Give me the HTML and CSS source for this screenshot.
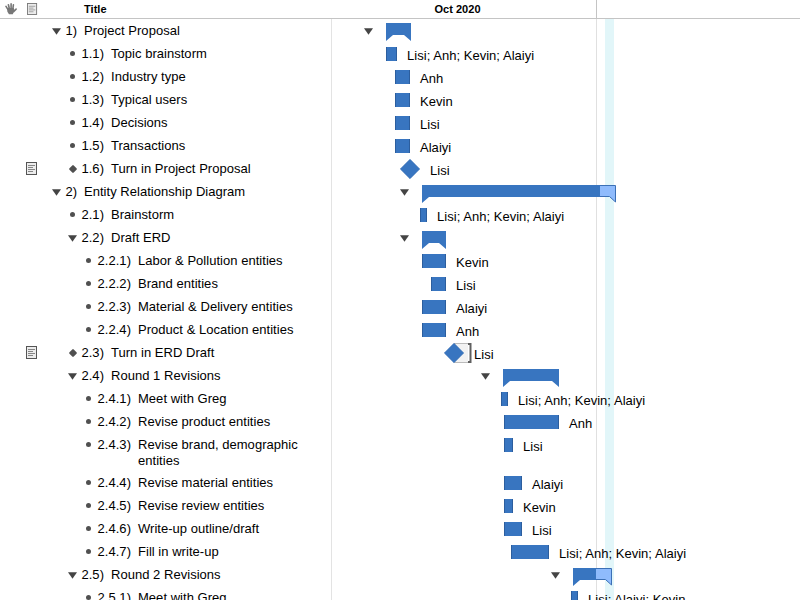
FILE: index.html
```
<!DOCTYPE html>
<html lang="en">
<head>
<meta charset="utf-8">
<title>Project Plan</title>
<link rel="stylesheet" href="styles.css">
</head>
<body>
<svg width="0" height="0" class="defs" aria-hidden="true">
  <symbol id="note" viewBox="0 0 12 13"><rect x=".5" y=".5" width="10" height="12" fill="#ececec" stroke="currentColor"/><path d="M2 3.5h7M2 5.5h5M2 7.5h7M2 9.5h5" stroke="currentColor" stroke-width=".9" opacity=".75"/></symbol>
  <symbol id="tri" viewBox="0 0 9 7"><path d="M0 .3h9L4.5 6.8z" fill="#444"/></symbol>
  <symbol id="dia" viewBox="0 0 20 20"><path d="M10 .3 19.7 10 10 19.7.3 10z" fill="#3875c0" stroke="#2e67b0" stroke-width=".6"/></symbol>
</svg>
<div class="app">
  <header class="head">
    <div class="icons">
      <svg class="hand" viewBox="0 0 12 12"><path d="M2.9 6.4 1 3.4M4.4 6 3.4 1.7M6.1 6V.9M7.8 6.2 8.4 1.9M8.6 8.6l2.5-2.5" stroke="#777" stroke-width="1.6" stroke-linecap="round"/><path d="M1.9 5h6.9l.6 2.3-1.6 3.9H4L2.4 8.8z" fill="#777"/></svg>
      <svg class="note"><use href="#note"/></svg>
    </div>
    <div class="head-title">Title</div>
    <div class="head-month">Oct 2020</div>
    <div class="head-rest"></div>
  </header>
  <main class="body">
    <div class="row first"><div class="flag"></div><div class="item l1"><svg class="tri"><use href="#tri"/></svg><span class="num">1)</span><span class="name">Project Proposal</span></div><div class="track" style="padding-left:32px"><svg class="tri"><use href="#tri"/></svg><i class="group" style="width:25px"></i></div></div>
    <div class="row"><div class="flag"></div><div class="item l2"><i class="dot"></i><span class="num">1.1)</span><span class="name">Topic brainstorm</span></div><div class="track" style="padding-left:54px"><i class="bar" style="width:11px"></i><span class="who">Lisi; Anh; Kevin; Alaiyi</span></div></div>
    <div class="row"><div class="flag"></div><div class="item l2"><i class="dot"></i><span class="num">1.2)</span><span class="name">Industry type</span></div><div class="track" style="padding-left:63px"><i class="bar" style="width:15px"></i><span class="who">Anh</span></div></div>
    <div class="row"><div class="flag"></div><div class="item l2"><i class="dot"></i><span class="num">1.3)</span><span class="name">Typical users</span></div><div class="track" style="padding-left:63px"><i class="bar" style="width:15px"></i><span class="who">Kevin</span></div></div>
    <div class="row"><div class="flag"></div><div class="item l2"><i class="dot"></i><span class="num">1.4)</span><span class="name">Decisions</span></div><div class="track" style="padding-left:63px"><i class="bar" style="width:15px"></i><span class="who">Lisi</span></div></div>
    <div class="row"><div class="flag"></div><div class="item l2"><i class="dot"></i><span class="num">1.5)</span><span class="name">Transactions</span></div><div class="track" style="padding-left:63px"><i class="bar" style="width:15px"></i><span class="who">Alaiyi</span></div></div>
    <div class="row"><div class="flag"><svg class="note"><use href="#note"/></svg></div><div class="item l2"><i class="dot mile"></i><span class="num">1.6)</span><span class="name">Turn in Project Proposal</span></div><div class="track" style="padding-left:68px"><svg class="dia"><use href="#dia"/></svg><span class="who">Lisi</span></div></div>
    <div class="row"><div class="flag"></div><div class="item l1"><svg class="tri"><use href="#tri"/></svg><span class="num">2)</span><span class="name">Entity Relationship Diagram</span></div><div class="track" style="padding-left:68px"><svg class="tri"><use href="#tri"/></svg><svg class="part" width="194" height="18"><path d="M0 0h178v12H7L0 18z" fill="#3875c0"/><path d="M178 .5h15.5v16.5l-6-5.5H178" fill="#8fbbfc" stroke="#3c70b6"/></svg></div></div>
    <div class="row"><div class="flag"></div><div class="item l2"><i class="dot"></i><span class="num">2.1)</span><span class="name">Brainstorm</span></div><div class="track" style="padding-left:88px"><i class="bar" style="width:7px"></i><span class="who">Lisi; Anh; Kevin; Alaiyi</span></div></div>
    <div class="row"><div class="flag"></div><div class="item l2"><svg class="tri"><use href="#tri"/></svg><span class="num">2.2)</span><span class="name">Draft ERD</span></div><div class="track" style="padding-left:68px"><svg class="tri"><use href="#tri"/></svg><i class="group" style="width:24px"></i></div></div>
    <div class="row"><div class="flag"></div><div class="item l3"><i class="dot"></i><span class="num">2.2.1)</span><span class="name">Labor &amp; Pollution entities</span></div><div class="track" style="padding-left:90px"><i class="bar" style="width:24px"></i><span class="who">Kevin</span></div></div>
    <div class="row"><div class="flag"></div><div class="item l3"><i class="dot"></i><span class="num">2.2.2)</span><span class="name">Brand entities</span></div><div class="track" style="padding-left:99px"><i class="bar" style="width:15px"></i><span class="who">Lisi</span></div></div>
    <div class="row"><div class="flag"></div><div class="item l3"><i class="dot"></i><span class="num">2.2.3)</span><span class="name">Material &amp; Delivery entities</span></div><div class="track" style="padding-left:90px"><i class="bar" style="width:24px"></i><span class="who">Alaiyi</span></div></div>
    <div class="row"><div class="flag"></div><div class="item l3"><i class="dot"></i><span class="num">2.2.4)</span><span class="name">Product &amp; Location entities</span></div><div class="track" style="padding-left:90px"><i class="bar" style="width:24px"></i><span class="who">Anh</span></div></div>
    <div class="row"><div class="flag"><svg class="note"><use href="#note"/></svg></div><div class="item l2"><i class="dot mile"></i><span class="num">2.3)</span><span class="name">Turn in ERD Draft</span></div><div class="track" style="padding-left:112px"><svg class="slack" viewBox="0 0 28 20"><path d="M10 .5h14v19H10z" fill="#f2f2f2"/><path d="M10 .5h14M10 19.5h14" stroke="#bbb"/><path d="M24 1h2.5v18H24" fill="none" stroke="#606060" stroke-width="2"/><use href="#dia" width="20" height="20"/></svg><span class="who near">Lisi</span></div></div>
    <div class="row"><div class="flag"></div><div class="item l2"><svg class="tri"><use href="#tri"/></svg><span class="num">2.4)</span><span class="name">Round 1 Revisions</span></div><div class="track" style="padding-left:149px"><svg class="tri"><use href="#tri"/></svg><i class="group" style="width:56px"></i></div></div>
    <div class="row"><div class="flag"></div><div class="item l3"><i class="dot"></i><span class="num">2.4.1)</span><span class="name">Meet with Greg</span></div><div class="track" style="padding-left:169px"><i class="bar" style="width:7px"></i><span class="who">Lisi; Anh; Kevin; Alaiyi</span></div></div>
    <div class="row"><div class="flag"></div><div class="item l3"><i class="dot"></i><span class="num">2.4.2)</span><span class="name">Revise product entities</span></div><div class="track" style="padding-left:172px"><i class="bar" style="width:55px"></i><span class="who">Anh</span></div></div>
    <div class="row tall"><div class="flag"></div><div class="item l3"><i class="dot"></i><span class="num">2.4.3)</span><span class="name">Revise brand, demographic<br>entities</span></div><div class="track" style="padding-left:172px"><i class="bar" style="width:9px"></i><span class="who">Lisi</span></div></div>
    <div class="row"><div class="flag"></div><div class="item l3"><i class="dot"></i><span class="num">2.4.4)</span><span class="name">Revise material entities</span></div><div class="track" style="padding-left:172px"><i class="bar" style="width:18px"></i><span class="who">Alaiyi</span></div></div>
    <div class="row"><div class="flag"></div><div class="item l3"><i class="dot"></i><span class="num">2.4.5)</span><span class="name">Revise review entities</span></div><div class="track" style="padding-left:172px"><i class="bar" style="width:9px"></i><span class="who">Kevin</span></div></div>
    <div class="row"><div class="flag"></div><div class="item l3"><i class="dot"></i><span class="num">2.4.6)</span><span class="name">Write-up outline/draft</span></div><div class="track" style="padding-left:172px"><i class="bar" style="width:18px"></i><span class="who">Lisi</span></div></div>
    <div class="row"><div class="flag"></div><div class="item l3"><i class="dot"></i><span class="num">2.4.7)</span><span class="name">Fill in write-up</span></div><div class="track" style="padding-left:179px"><i class="bar" style="width:38px"></i><span class="who">Lisi; Anh; Kevin; Alaiyi</span></div></div>
    <div class="row"><div class="flag"></div><div class="item l2"><svg class="tri"><use href="#tri"/></svg><span class="num">2.5)</span><span class="name">Round 2 Revisions</span></div><div class="track" style="padding-left:219px"><svg class="tri"><use href="#tri"/></svg><svg class="part" width="39" height="18"><path d="M0 0h23v12H7L0 18z" fill="#3875c0"/><path d="M23 .5h15.5v16.5l-6-5.5H23" fill="#8fbbfc" stroke="#3c70b6"/></svg></div></div>
    <div class="row"><div class="flag"></div><div class="item l3"><i class="dot"></i><span class="num">2.5.1)</span><span class="name">Meet with Greg</span></div><div class="track" style="padding-left:239px"><i class="bar" style="width:7px"></i><span class="who">Lisi; Alaiyi; Kevin</span></div></div>
  </main>
</div>
</body>
</html>
```

FILE: styles.css
```
* { box-sizing: border-box; }
body { margin: 0; background: #fff; color: #000; font: 13px/16px "Liberation Sans", Arial, sans-serif; letter-spacing: .03px; }
.defs { display: none; }
.app { width: 800px; height: 600px; overflow: hidden; display: flex; flex-direction: column; }
svg { display: block; flex: none; }

.head { flex: none; display: grid; grid-template-columns: 84px 233px 279px 1fr; height: 19px; border-bottom: 1px solid #c4c4c4; font-size: 11px; font-weight: bold; line-height: 18px; }
.icons { display: flex; padding: 3px 0 0 5px; }
.icons .note { width: 11px; height: 12px; margin: 0 0 0 10px; color: #777; }
.hand { width: 12px; height: 12px; fill: none; }
.head-month { padding-left: 2px; text-align: center; }
.head-rest { border-left: 1px solid #c4c4c4; }
.note { width: 12px; height: 13px; color: #555; }

.body {
  flex: 1;
  min-height: 0;
  overflow: hidden;
  background:
    linear-gradient(#e3e3e3, #e3e3e3) 331px 0 / 1px 100% no-repeat,
    linear-gradient(#e0e0e0, #e0e0e0) 596px 0 / 1px 100% no-repeat,
    linear-gradient(#e2f6f9, #e2f6f9) 605px 0 / 9px 100% no-repeat;
}
.row { display: grid; grid-template-columns: 52px 280px 1fr; height: 23px; }
.row.tall { height: 38px; }
.flag { padding: 5px 0 0 26px; }

.item { display: flex; align-items: flex-start; padding-top: 4px; white-space: nowrap; }
.l2 { padding-left: 16px; }
.l3 { padding-left: 32px; }
.item .tri { margin-top: 5px; }
.tri { width: 9px; height: 7px; }
.dot { flex: none; width: 5px; height: 5px; margin: 5px 2px 0; border-radius: 50%; background: #505050; }
.mile { width: 6px; height: 6px; margin: 5px 1px 0 2px; border-radius: 1px; transform: rotate(45deg); }
.num { text-align: right; width: 16px; margin-right: 7px; }
.l2 .num { width: 27px; }
.l3 .num { width: 38px; }

.track { display: flex; align-items: flex-start; white-space: nowrap; }
.track .tri { margin: 9px 13px 0 0; }
.bar { flex: none; height: 14px; margin-top: 5px; background: #3875c0; border: solid #2c5e9e; border-width: 0 1px; }
.group { flex: none; height: 18px; margin-top: 5px; background: #3875c0; clip-path: polygon(0 0, 100% 0, 100% 100%, calc(100% - 7px) 12px, 7px 12px, 0 100%); }
.part { margin-top: 5px; }
.first .group { margin-top: 4px; }
.dia { width: 20px; height: 20px; margin-top: 2px; }
.slack { width: 28px; height: 20px; margin-top: 2px; }
.who { margin: 6px 0 0 10px; }
.near { margin-left: 2px; }
```
